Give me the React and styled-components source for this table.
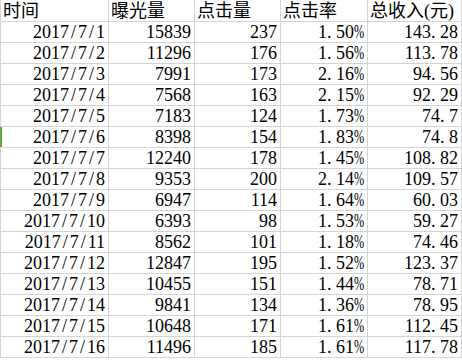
import React from "react";
import styled, { createGlobalStyle } from "styled-components";

const GlobalStyle = createGlobalStyle`
  html, body {
    margin: 0;
    padding: 0;
    background: #fff;
  }
  body {
    font-family: "Liberation Serif", "Noto Sans CJK SC", serif;
  }
`;

const rows = [
  ["2017/7/1", "15839", "237", "1.50%", "143.28"],
  ["2017/7/2", "11296", "176", "1.56%", "113.78"],
  ["2017/7/3", "7991", "173", "2.16%", "94.56"],
  ["2017/7/4", "7568", "163", "2.15%", "92.29"],
  ["2017/7/5", "7183", "124", "1.73%", "74.7"],
  ["2017/7/6", "8398", "154", "1.83%", "74.8"],
  ["2017/7/7", "12240", "178", "1.45%", "108.82"],
  ["2017/7/8", "9353", "200", "2.14%", "109.57"],
  ["2017/7/9", "6947", "114", "1.64%", "60.03"],
  ["2017/7/10", "6393", "98", "1.53%", "59.27"],
  ["2017/7/11", "8562", "101", "1.18%", "74.46"],
  ["2017/7/12", "12847", "195", "1.52%", "123.37"],
  ["2017/7/13", "10455", "151", "1.44%", "78.71"],
  ["2017/7/14", "9841", "134", "1.36%", "78.95"],
  ["2017/7/15", "10648", "171", "1.61%", "112.45"],
  ["2017/7/16", "11496", "185", "1.61%", "117.78"],
];

const headers = ["时间", "曝光量", "点击量", "点击率", "总收入(元)"];

const Sheet = styled.div`
  display: grid;
  grid-template-columns: 108px 86px 86px 87px 94px;
  width: 462px;
  border-left: 1px solid #d4d4d4;
  box-sizing: border-box;
`;

const Cell = styled.div`
  position: relative;
  box-sizing: border-box;
  height: ${(p) => (p.$head ? 22 : 21)}px;
  border-right: 1px solid #d4d4d4;
  border-bottom: 1px solid #d4d4d4;
  padding: 0 3px 0 2px;
  display: flex;
  align-items: flex-end;
  justify-content: ${(p) => (p.$head ? "flex-start" : "flex-end")};
  font-size: 18px;
  line-height: 20px;
  color: #000;
  white-space: nowrap;
`;

/* SimSun-like half-width slot for punctuation */
const Sep = styled.span`
  display: inline-block;
  width: 9px;
  text-align: ${(p) => p.$align};
`;

const Pct = styled.span`
  display: inline-block;
  width: 10px;
  transform: scaleX(0.68);
  transform-origin: left center;
`;

const Mark = styled.span`
  position: absolute;
  left: -1px;
  top: 0;
  bottom: 0;
  width: 2px;
  background: #5fa83a;
`;

function Value({ text }) {
  return text.split("").map((c, i) => {
    if (c === "/") return <Sep key={i} $align="center">/</Sep>;
    if (c === ".") return <Sep key={i} $align="left">.</Sep>;
    if (c === "%") return <Pct key={i}>%</Pct>;
    return c;
  });
}

export default function App() {
  return (
    <>
      <GlobalStyle />
      <Sheet>
        {headers.map((h) => (
          <Cell key={h} $head>
            {h}
          </Cell>
        ))}
        {rows.map((r) =>
          r.map((v, i) => (
            <Cell key={r[0] + i}>
              {i === 0 && r[0] === "2017/7/6" && <Mark />}
              <Value text={v} />
            </Cell>
          ))
        )}
      </Sheet>
    </>
  );
}
